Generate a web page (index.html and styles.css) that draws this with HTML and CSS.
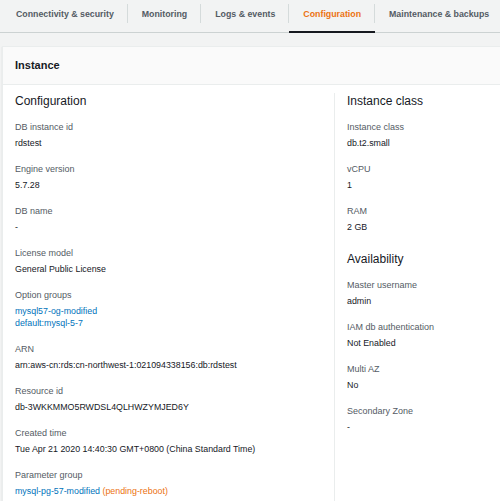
FILE: index.html
```html
<!DOCTYPE html>
<html>
<head>
<meta charset="utf-8">
<link rel="stylesheet" href="styles.css">
</head>
<body>
<div class="tabs">
  <div class="tab">Connectivity &amp; security</div>
  <div class="tab">Monitoring</div>
  <div class="tab">Logs &amp; events</div>
  <div class="tab active">Configuration</div>
  <div class="tab">Maintenance &amp; backups</div>
</div>
<div class="panel">
  <div class="panel-header">Instance</div>
  <div class="panel-body">
    <div class="col left">
      <div class="heading">Configuration</div>
      <div class="item"><div class="label">DB instance id</div><div class="value">rdstest</div></div>
      <div class="item"><div class="label">Engine version</div><div class="value">5.7.28</div></div>
      <div class="item"><div class="label">DB name</div><div class="value">-</div></div>
      <div class="item"><div class="label">License model</div><div class="value">General Public License</div></div>
      <div class="item"><div class="label">Option groups</div><div class="value"><a class="link">mysql57-og-modified</a></div><div class="value"><a class="link">default:mysql-5-7</a></div></div>
      <div class="item"><div class="label">ARN</div><div class="value">arn:aws-cn:rds:cn-northwest-1:021094338156:db:rdstest</div></div>
      <div class="item"><div class="label">Resource id</div><div class="value">db-3WKKMMO5RWDSL4QLHWZYMJED6Y</div></div>
      <div class="item"><div class="label">Created time</div><div class="value">Tue Apr 21 2020 14:40:30 GMT+0800 (China Standard Time)</div></div>
      <div class="item"><div class="label">Parameter group</div><div class="value"><a class="link">mysql-pg-57-modified</a> <span class="pending">(pending-reboot)</span></div></div>
    </div>
    <div class="col right">
      <div class="heading">Instance class</div>
      <div class="item"><div class="label">Instance class</div><div class="value">db.t2.small</div></div>
      <div class="item"><div class="label">vCPU</div><div class="value">1</div></div>
      <div class="item"><div class="label">RAM</div><div class="value">2 GB</div></div>
      <div class="heading sub">Availability</div>
      <div class="item"><div class="label">Master username</div><div class="value">admin</div></div>
      <div class="item"><div class="label">IAM db authentication</div><div class="value">Not Enabled</div></div>
      <div class="item"><div class="label">Multi AZ</div><div class="value">No</div></div>
      <div class="item"><div class="label">Secondary Zone</div><div class="value">-</div></div>
    </div>
  </div>
</div>
</body>
</html>
```
FILE: styles.css
```css
html, body {
  margin: 0;
  padding: 0;
  background: #f2f3f3;
  overflow: hidden;
  width: 500px;
  height: 501px;
}
body {
  font-family: "Liberation Sans", Arial, sans-serif;
  color: #16191f;
}
.tabs {
  display: flex;
  height: 32px;
  padding-left: 2px;
  border-bottom: 1px solid #ccd2d2;
  white-space: nowrap;
}
.tab {
  position: relative;
  padding: 0 14px;
  line-height: 28px;
  font-size: 8.8px;
  font-weight: bold;
  color: #545b64;
  border-bottom: 2px solid transparent;
  margin-bottom: -1px;
}
.tab + .tab::before {
  content: "";
  position: absolute;
  left: -1px;
  top: 4px;
  height: 19px;
  width: 1px;
  background: #d5dbdb;
}
.tab.active {
  color: #ec7211;
  border-bottom-color: #16191f;
}
.panel {
  margin: 13px 0 0 2px;
  width: 700px;
  background: #fff;
  border: 1px solid #eaeded;
  box-shadow: 0 1px 1px rgba(0,28,36,0.15);
  height: 600px;
}
.panel-header {
  background: #fafafa;
  border-bottom: 1px solid #eaeded;
  height: 37px;
  line-height: 37px;
  padding-left: 12px;
  font-size: 11px;
  font-weight: bold;
}
.panel-body {
  display: flex;
  padding-top: 8px;
}
.col.left {
  width: 306px;
  padding: 0 13px 0 12px;
  border-right: 1px solid #eaeded;
}
.col.right {
  padding-left: 12px;
}
.heading {
  font-size: 12px;
  line-height: 16px;
  margin-bottom: 12px;
}
.heading.sub {
  margin-top: 18px;
}
.item {
  margin-bottom: 14px;
}
.label {
  font-size: 9px;
  line-height: 12px;
  color: #545b64;
  margin-bottom: 4px;
}
.value {
  font-size: 8.85px;
  line-height: 12px;
  white-space: nowrap;
}
.link {
  color: #0073bb;
}
.pending {
  color: #ec7211;
}
```
